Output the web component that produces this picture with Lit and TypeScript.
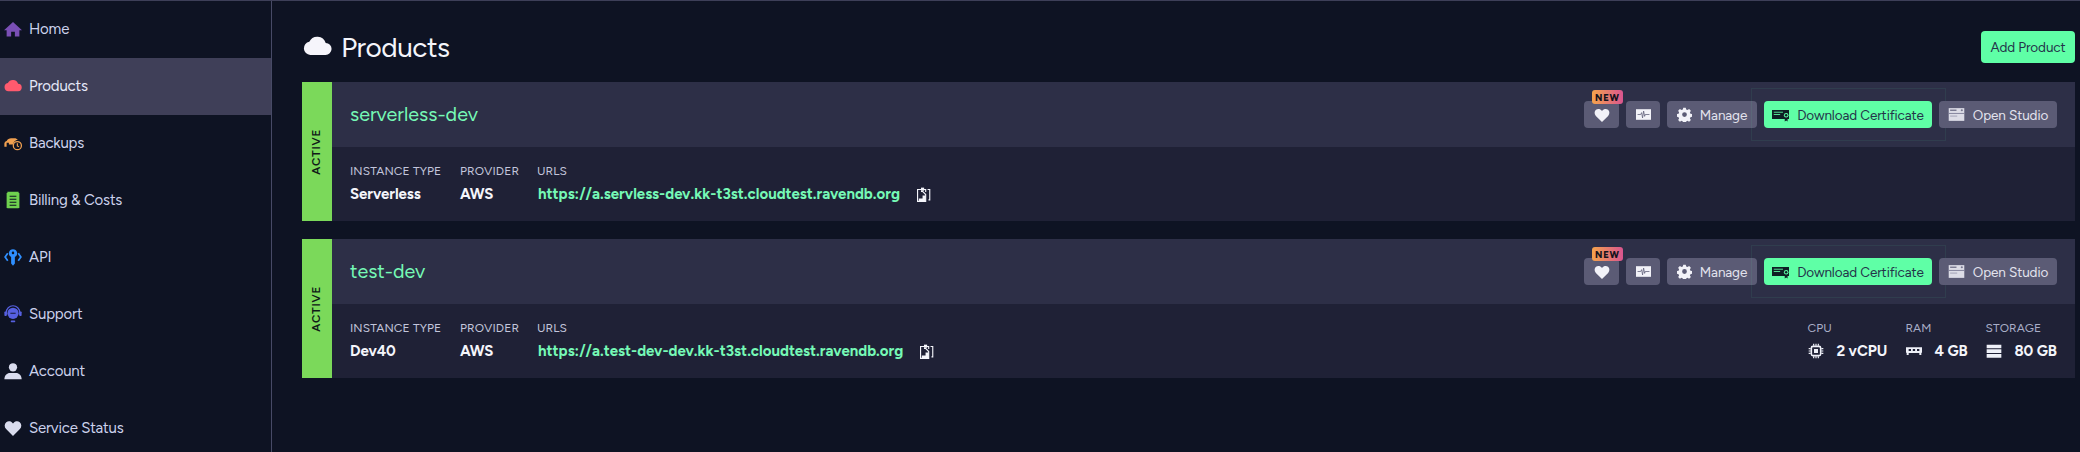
import { LitElement, html, css, svg } from "lit";
import { customElement } from "lit/decorators.js";

const cloudPath = "M6 19A5.500 5.500 0 0 1 5.200 8.100 7.300 7.300 0 0 1 18.800 9 5 5 0 0 1 18.500 19Z";
const heartPath = "M12 22.500 2.800 13.400C.2 10.700.3 6.500 3 4.300 5.400 2.400 8.900 2.800 11 5L12 6.100 13 5C15.100 2.800 18.600 2.400 21 4.300 23.700 6.500 23.800 10.700 21.200 13.400Z";

const icons: Record<string, unknown> = {
  home: svg`<path fill="#7a4fb5" d="M12 2.500 0 13.500H3.500V22H9.500V15.500H14.500V22H20.500V13.500H24Z"/>`,
  cloud: svg`<path fill="currentColor" d="${cloudPath}"/>`,
  backup: svg`<path fill="#f0a050" d="M.5 17V13C.5 10.800 2 9.500 3.600 9.200 4.600 6.800 7 5.500 9.400 5.500H14c1.800 0 3.400.8 4.400 2.200-3.200.5-5.800 3-6.400 6.300H6.500v-2.500H3.500V17Z"/><circle cx="17.800" cy="15.500" r="5.400" fill="none" stroke="#f0a050" stroke-width="1.700"/><path d="M17.800 12.300v3.500l2.200 1.400" fill="none" stroke="#f0a050" stroke-width="1.500"/>`,
  bill: svg`<path fill="#6fd14f" d="M4.500 1h15v1.500h1V22.500h-1V23h-15v-.5h-1V2.500h1Z"/><path stroke="#0e1323" stroke-width="1.600" d="M7.500 7h9M7.500 11h9M7.500 15h9M7.500 19h9"/>`,
  api: svg`<path fill="#2f8fff" d="M12 1.500a5.500 5.500 0 0 1 2.500 10.400V20.500l-2.500 3-2.500-3V11.900A5.500 5.500 0 0 1 12 1.500Z"/><circle cx="12" cy="6.500" r="1.700" fill="#0e1323"/><path fill="none" stroke="#2f8fff" stroke-width="2.300" d="M5 7 1.500 12 5 17M19 7 22.500 12 19 17"/>`,
  support: svg`<circle cx="12" cy="11" r="7.500" fill="#5660e0"/><path d="M8.500 11h7" stroke="#0e1323" stroke-width="1.200"/><path fill="none" stroke="#5660e0" stroke-width="1.600" d="M3 13V10a9 9 0 0 1 18 0v3"/><rect x=".5" y="8.500" width="3.200" height="6" rx="1" fill="#5660e0"/><rect x="20.300" y="8.500" width="3.200" height="6" rx="1" fill="#5660e0"/><rect x="9" y="20.500" width="6" height="2.500" rx="1" fill="#5660e0"/>`,
  user: svg`<circle cx="12" cy="7" r="5.500" fill="#d9dcee"/><path fill="#d9dcee" d="M.500 23c0-5.500 3.500-8.500 7.500-8.500h8c4 0 7.500 3 7.500 8.500Z"/>`,
  heart: svg`<path fill="currentColor" d="${heartPath}"/>`,
  pulse: svg`<path fill="currentColor" d="M0 3.500h24v17H0Z"/><path fill="none" stroke="#5b5b75" stroke-width="1.200" d="M2.500 12h5l1.500-3 1.500 8.500 1.700-11 1.600 8.500 1-3H21.500"/>`,
  gear: svg`<path fill="currentColor" fill-rule="evenodd" d="M10 1h4l.7 3 2 .9 2.700-1.600 2.800 2.800-1.600 2.700.9 2 3 .7v4l-3 .7-.9 2 1.600 2.700-2.800 2.800-2.700-1.600-2 .9-.7 3h-4l-.7-3-2-.9-2.700 1.600-2.800-2.800 1.600-2.700-.9-2-3-.7v-4l3-.7.9-2-1.600-2.700 2.800-2.800 2.700 1.600 2-.9ZM12 8.200a3.800 3.800 0 1 0 0 7.600 3.800 3.800 0 0 0 0-7.600Z"/>`,
  cert: svg`<path fill="#0e1f24" d="M0 5.500h24V18.500H22V22l-2-1.500L18 22V18.500H0Z"/><path stroke="#5fffa6" stroke-width="1.200" d="M2.500 8.800h13M2.500 12h9"/><circle cx="20" cy="13" r="3.200" fill="#5fffa6"/><circle cx="20" cy="13" r="1.700" fill="#0e1f24"/>`,
  studio: svg`<path fill="#dcdce6" d="M1 3h22v18H1Z"/><path fill="#7d7d97" d="M1 9.800h22v1.300H1Z"/><path fill="#77778f" d="M3 5h9v2H3Z"/><circle cx="19.500" cy="6" r="1.500" fill="#77778f"/><path fill="#a5a5b8" d="M3 13.500h10v1.500H3Z"/>`,
  clip: svg`<path fill="none" stroke="currentColor" stroke-width="1.800" d="M8.500 4H2.500v19h13V12l-5-5H8M15.500 8V4h-3M18.500 4h3.500v16.500h-2"/><path fill="currentColor" d="M8 1h5v5H8Z"/><path fill="currentColor" d="M10.500 13.500h5v9.500H4.500v-4.500h6Z"/>`,
  cpu: svg`<rect x="5" y="5" width="14" height="14" rx="2.500" fill="none" stroke="currentColor" stroke-width="2.400"/><rect x="9" y="9" width="6" height="6" fill="currentColor"/><path stroke="currentColor" stroke-width="1.800" d="M8.500 1v3M12 1v3M15.500 1v3M8.500 20v3M12 20v3M15.500 20v3M1 8.500h3M1 12h3M1 15.500h3M20 8.500h3M20 12h3M20 15.500h3"/>`,
  ram: svg`<path fill="currentColor" d="M0 6.500h24v8h-1V18h-3v-3H4v3H1v-3.500H0Z"/><path fill="#1f2136" d="M4 9h3.500v3H4ZM10.200 9h3.500v3h-3.500ZM16.500 9H20v3h-3.500Z"/>`,
  storage: svg`<path fill="currentColor" d="M1 2.500h22v5.500H1ZM1 9.500h22v5.500H1ZM1 16.500h22V22H1Z"/>`,
};

const icon = (name: string, cls = "") =>
  html`<svg class="icon ${cls}" viewBox="0 0 24 24" aria-hidden="true">${icons[name]}</svg>`;

const nav = [
  ["home", "Home"],
  ["cloud", "Products"],
  ["backup", "Backups"],
  ["bill", "Billing & Costs"],
  ["api", "API"],
  ["support", "Support"],
  ["user", "Account"],
  ["heart", "Service Status"],
];

const products = [
  { name: "serverless-dev", type: "Serverless", url: "https://a.servless-dev.kk-t3st.cloudtest.ravendb.org", stats: false },
  { name: "test-dev", type: "Dev40", url: "https://a.test-dev-dev.kk-t3st.cloudtest.ravendb.org", stats: true },
];

@customElement("app-root")
export class AppRoot extends LitElement {
  static styles = css`
    :host {
      display: block;
      width: 2080px;
      height: 452px;
      overflow: hidden;
      background: #0e1323;
      font-family: "Figtree", "Inter", "Liberation Sans", sans-serif;
      color: #d9dcee;
      box-sizing: border-box;
      border-top: 1px solid #3d3f58;
    }
    * { box-sizing: border-box; }
    svg { flex: none; }
    .layout { display: flex; height: 451px; }
    .side { width: 272px; flex: none; border-right: 1px solid #474a66; }
    .nav-item { height: 57px; display: flex; align-items: center; gap: 7px; padding: 0 0 2px 4px; font-size: 15px; letter-spacing: -0.2px; color: #ccd2ec; }
    .nav-item .icon { width: 18px; height: 18px; color: #d9dcee; }
    .nav-item.active { background: #3f3f58; color: #e6e9f8; }
    .nav-item.active .icon { color: #ff5a6e; }
    .main { flex: 1; min-width: 0; padding: 30px 5px 0 30px; }
    .top { display: flex; align-items: center; justify-content: space-between; height: 32px; margin-bottom: 19px; }
    .title { display: flex; align-items: center; gap: 9px; font-size: 28px; letter-spacing: -0.5px; color: #f4f5fb; font-weight: 400; margin: 0 0 0 1px; }
    .title .icon { width: 29px; height: 29px; color: #f6f5fb; margin-top: -2px; }
    .add { height: 32px; width: 94px; border-radius: 4px; background: #5fffa6; color: #24344a; font-size: 13.500px; display: flex; align-items: center; justify-content: center; letter-spacing: -0.1px; }
    .card { display: flex; height: 139px; margin-bottom: 18px; }
    .strip { width: 30px; flex: none; background: #7bd95a; display: flex; align-items: center; justify-content: center; }
    .strip span { writing-mode: vertical-rl; transform: rotate(180deg); font-size: 11.500px; font-weight: 600; letter-spacing: 0.8px; color: #101a18; margin-left: -2px; }
    .content { flex: 1; min-width: 0; display: flex; flex-direction: column; }
    .head { height: 65px; background: #2d2f47; display: flex; align-items: center; justify-content: space-between; padding: 0 18px 0 18px; }
    .name { font-size: 19.700px; color: #76f9b6; margin-top: -2px; }
    .actions { display: flex; gap: 7px; }
    .btn { height: 27px; border-radius: 4px; background: #5b5b75; color: #e3e3ee; font-size: 13.500px; display: flex; align-items: center; justify-content: center; gap: 8px; position: relative; letter-spacing: -0.1px; }
    .btn .icon { width: 15px; height: 15px; color: #f2f2f8; }
    .b-heart { width: 35px; }
    .b-heart .icon { width: 16px; height: 16px; }
    .b-pulse { width: 34px; }
    .b-manage { width: 90px; }
    .b-cert { width: 168px; background: #5fffa6; color: #24344a; }
    .b-cert .icon { width: 17px; height: 17px; }
    .b-studio { width: 118px; }
    .b-studio .icon { width: 17px; height: 17px; }
    .b-cert::after { content: ""; position: absolute; left: -13px; right: -14px; top: -13px; bottom: -13px; border: 1px solid rgba(95, 255, 166, 0.07); pointer-events: none; }
    .badge { position: absolute; left: 8px; top: -11px; width: 31px; height: 14px; border-radius: 3px; background: linear-gradient(90deg, #f5a44c, #d9558f); color: #15131c; font-size: 9.500px; font-weight: 800; letter-spacing: 0.8px; display: flex; align-items: center; justify-content: center; }
    .body { flex: 1; background: #1f2136; display: flex; justify-content: space-between; padding: 17px 18px 0 18px; }
    .group { display: flex; }
    .col { display: flex; flex-direction: column; }
    .label { font-size: 12px; line-height: 14px; letter-spacing: 0.12px; color: #c3c6dc; white-space: nowrap; }
    .value { margin-top: 6px; font-size: 15px; line-height: 20px; font-weight: 700; letter-spacing: -0.05px; color: #f4f5fb; white-space: nowrap; display: flex; align-items: center; }
    .c-type { width: 110px; }
    .c-prov { width: 77px; }
    .url { color: #76f9b6; margin-left: 1px; letter-spacing: 0; }
    .copy { width: 15px; height: 17px; margin-left: 16px; color: #f4f5fb; }
    .stat .value { gap: 12px; }
    .stat .icon { width: 16px; height: 16px; margin-left: 1px; color: #eef0f8; }
    .c-cpu { width: 98px; }
    .c-ram { width: 80px; }
    .stat .label { color: #a9aec8; }
  `;

  private card(p: (typeof products)[number]) {
    return html`<article class="card">
      <div class="strip"><span>ACTIVE</span></div>
      <div class="content">
        <div class="head">
          <div class="name">${p.name}</div>
          <div class="actions">
            <div class="btn b-heart">${icon("heart")}<span class="badge">NEW</span></div>
            <div class="btn b-pulse">${icon("pulse")}</div>
            <div class="btn b-manage">${icon("gear")}Manage</div>
            <div class="btn b-cert">${icon("cert")}Download Certificate</div>
            <div class="btn b-studio">${icon("studio")}Open Studio</div>
          </div>
        </div>
        <div class="body">
          <div class="group">
            <div class="col c-type"><div class="label">INSTANCE TYPE</div><div class="value">${p.type}</div></div>
            <div class="col c-prov"><div class="label">PROVIDER</div><div class="value">AWS</div></div>
            <div class="col">
              <div class="label">URLS</div>
              <div class="value"><span class="url">${p.url}</span>${icon("clip", "copy")}</div>
            </div>
          </div>
          ${p.stats
            ? html`<div class="group stat">
                <div class="col c-cpu"><div class="label">CPU</div><div class="value">${icon("cpu")}2 vCPU</div></div>
                <div class="col c-ram"><div class="label">RAM</div><div class="value">${icon("ram")}4 GB</div></div>
                <div class="col"><div class="label">STORAGE</div><div class="value">${icon("storage")}80 GB</div></div>
              </div>`
            : ""}
        </div>
      </div>
    </article>`;
  }

  render() {
    return html`<div class="layout">
      <nav class="side">
        ${nav.map(([i, t]) => html`<div class="nav-item ${t === "Products" ? "active" : ""}">${icon(i)}<span>${t}</span></div>`)}
      </nav>
      <main class="main">
        <div class="top">
          <h1 class="title">${icon("cloud")}Products</h1>
          <div class="add">Add Product</div>
        </div>
        ${products.map((p) => this.card(p))}
      </main>
    </div>`;
  }
}
